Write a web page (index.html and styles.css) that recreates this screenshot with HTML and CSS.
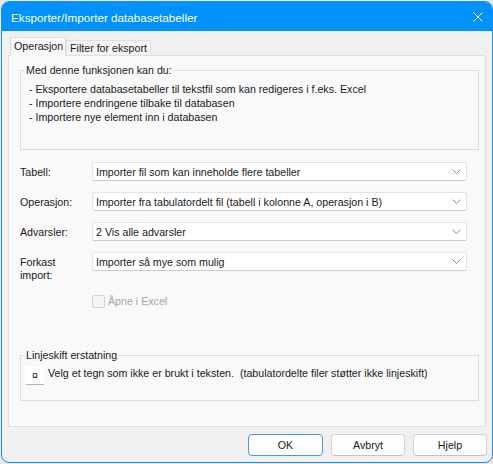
FILE: index.html
```html
<!DOCTYPE html>
<html>
<head>
<meta charset="utf-8">
<link rel="stylesheet" href="styles.css">
</head>
<body>
<div class="window">
  <div class="titlebar">
    <span class="title">Eksporter/Importer databasetabeller</span>
    <svg class="close" width="10" height="10" viewBox="0 0 10 10"><path d="M0.5 0.5 L9.5 9.5 M9.5 0.5 L0.5 9.5" stroke="#fff" stroke-width="1" fill="none"/></svg>
  </div>
  <div class="body">
    <div class="tabs">
      <div class="tab active">Operasjon</div>
      <div class="tab">Filter for eksport</div>
    </div>
    <div class="panel">
      <fieldset class="group info">
        <legend>Med denne funksjonen kan du:</legend>
        <div class="lines">
          <div>- Eksportere databasetabeller til tekstfil som kan redigeres i f.eks. Excel</div>
          <div>- Importere endringene tilbake til databasen</div>
          <div>- Importere nye element inn i databasen</div>
        </div>
      </fieldset>
      <div class="form">
        <div class="label">Tabell:</div>
        <div class="combo"><span>Importer fil som kan inneholde flere tabeller</span><svg class="chev" width="9" height="5" viewBox="0 0 9 5"><path d="M0.5 0.5 L4.5 4.5 L8.5 0.5" stroke="#8a8a8a" fill="none"/></svg></div>
        <div class="label">Operasjon:</div>
        <div class="combo"><span>Importer fra tabulatordelt fil (tabell i kolonne A, operasjon i B)</span><svg class="chev" width="9" height="5" viewBox="0 0 9 5"><path d="M0.5 0.5 L4.5 4.5 L8.5 0.5" stroke="#8a8a8a" fill="none"/></svg></div>
        <div class="label">Advarsler:</div>
        <div class="combo"><span>2 Vis alle advarsler</span><svg class="chev" width="9" height="5" viewBox="0 0 9 5"><path d="M0.5 0.5 L4.5 4.5 L8.5 0.5" stroke="#8a8a8a" fill="none"/></svg></div>
        <div class="label">Forkast<br>import:</div>
        <div class="combo"><span>Importer så mye som mulig</span><svg class="chev" width="9" height="5" viewBox="0 0 9 5"><path d="M0.5 0.5 L4.5 4.5 L8.5 0.5" stroke="#8a8a8a" fill="none"/></svg></div>
      </div>
      <div class="checkrow">
        <span class="checkbox"></span>
        <span class="checklabel">Åpne i Excel</span>
      </div>
      <fieldset class="group linebreak">
        <legend>Linjeskift erstatning</legend>
        <div class="lbrow">
          <span class="charbox">¤</span>
          <span>Velg et tegn som ikke er brukt i teksten.&nbsp; (tabulatordelte filer støtter ikke linjeskift)</span>
        </div>
      </fieldset>
    </div>
    <div class="buttons">
      <button class="btn default">OK</button>
      <button class="btn">Avbryt</button>
      <button class="btn">Hjelp</button>
    </div>
  </div>
</div>
</body>
</html>
```
FILE: styles.css
```css
html, body {
  margin: 0;
  padding: 0;
}
body {
  background: #e9e9e9;
  width: 493px;
  height: 464px;
  overflow: hidden;
  font-family: "Liberation Sans", Arial, sans-serif;
  font-size: 10.67px;
  color: #1a1a1a;
}
.window {
  margin: 1px 0 0 1px;
  width: 492px;
  height: 462px;
  box-sizing: border-box;
  border: 1px solid #1a8df5;
  border-radius: 8px;
  overflow: hidden;
  background: #f0f0f0;
  display: flex;
  flex-direction: column;
}
.titlebar {
  height: 29px;
  background: #0091fa;
  display: flex;
  align-items: center;
  justify-content: space-between;
  padding: 0 9px 0 9px;
  flex: none;
}
.title {
  color: #fff;
  font-family: "Liberation Sans", Arial, sans-serif;
  font-size: 11.7px;
  margin-top: 1px;
}
.close {
  display: block;
}
.body {
  flex: 1;
  padding: 6px 6px 0 6px;
  display: flex;
  flex-direction: column;
}
.tabs {
  display: flex;
  align-items: flex-end;
  height: 18px;
  padding-left: 2px;
  position: relative;
  z-index: 1;
}
.tab {
  height: 15px;
  line-height: 14px;
  padding: 0 3px;
  border: 1px solid #e0e0e0;
  border-bottom: none;
  background: #f4f4f4;
  box-sizing: border-box;
}
.tab.active {
  height: 19px;
  line-height: 17px;
  padding: 0 3px;
  background: #f9f9f9;
  border-color: #dcdcdc;
  margin-bottom: -1px;
  width: 56px;
}
.panel {
  height: 372px;
  box-sizing: border-box;
  background: #f9f9f9;
  border: 1px solid #dedede;
  padding: 7px 6px 0 11px;
  display: flex;
  flex-direction: column;
}
.group {
  margin: 0;
  border: 1px solid #dcdcdc;
  padding: 0;
  min-width: 0;
}
.group legend {
  padding: 0 2px;
  margin-left: 3px;
  line-height: 14px;
}
.info .lines {
  padding: 5px 0 25px 8px;
  line-height: 14px;
}
.form {
  display: grid;
  grid-template-columns: 72px 375px;
  row-gap: 11px;
  margin-top: 12px;
}
.label {
  padding-top: 4px;
  line-height: 13px;
}
.combo {
  height: 19px;
  box-sizing: border-box;
  background: #fff;
  border: 1px solid #e3e3e3;
  border-bottom-color: #cdcdcd;
  border-radius: 2px;
  display: flex;
  align-items: center;
  justify-content: space-between;
  padding: 0 5px 0 3px;
}
.chev {
  display: block;
}
.checkrow {
  display: flex;
  align-items: center;
  margin-top: 12px;
  margin-left: 72px;
  height: 14px;
}
.checkbox {
  width: 13px;
  height: 13px;
  box-sizing: border-box;
  border: 1px solid #d2d2d2;
  border-radius: 2px;
  background: #f6f6f6;
}
.checklabel {
  margin-left: 3px;
  color: #a6a6a6;
}
.linebreak {
  margin-top: 40px;
}
.lbrow {
  display: flex;
  align-items: flex-start;
  padding: 4px 0 15px 5px;
}
.charbox {
  width: 18px;
  height: 19px;
  box-sizing: border-box;
  background: #fff;
  border-bottom: 1px solid #b5b5b5;
  font-size: 10.67px;
  line-height: 18px;
  text-align: center;
  margin-right: 4px;
  flex: none;
}
.lbrow span + span {
  line-height: 14px;
}
.buttons {
  display: flex;
  justify-content: flex-end;
  gap: 8px;
  margin-top: 7px;
  margin-right: -1px;
}
.btn {
  width: 74px;
  height: 22px;
  box-sizing: border-box;
  background: #fdfdfd;
  border: 1px solid #d4d4d4;
  border-bottom-color: #c4c4c4;
  border-radius: 4px;
  font-family: "Liberation Sans", Arial, sans-serif;
  font-size: 10.67px;
  color: #1a1a1a;
  padding: 0;
}
.btn.default {
  width: 75px;
  border: 1px solid #4a9ae0;
}
```
